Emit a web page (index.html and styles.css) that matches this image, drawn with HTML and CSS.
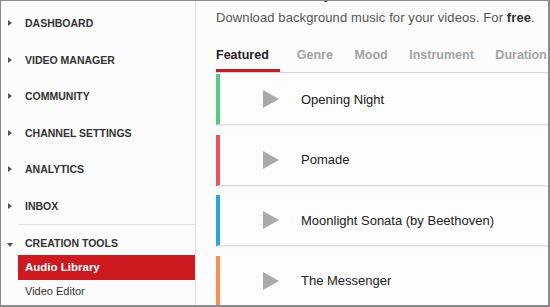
FILE: index.html
```html
<!DOCTYPE html>
<html lang="en">
  <head>
    <meta charset="UTF-8" />
    <meta name="viewport" content="width=device-width, initial-scale=1.0" />
    <title>Audio Library</title>
    <link rel="stylesheet" href="styles.css">
  </head>
  <body>
    <div class="frame">
      <div class="sidebar">
        <div class="nav-item">Dashboard</div>
        <div class="nav-item">Video Manager</div>
        <div class="nav-item">Community</div>
        <div class="nav-item">Channel Settings</div>
        <div class="nav-item">Analytics</div>
        <div class="nav-item">Inbox</div>
        <div class="nav-group">
          <div class="nav-item open">Creation Tools</div>
          <div class="sub-item active">Audio Library</div>
          <div class="sub-item">Video Editor</div>
        </div>
      </div>

      <div class="main">
        <h1 class="page-title">Audio Library</h1>
        <div class="intro">Download background music for your videos. For <b>free</b>.</div>

        <div class="tabs">
          <div class="tab active">Featured</div>
          <div class="tab">Genre</div>
          <div class="tab">Mood</div>
          <div class="tab">Instrument</div>
          <div class="tab">Duration</div>
        </div>

        <div class="tracks">
          <div class="track green">
            <span class="play"></span>
            <span class="track-title">Opening Night</span>
          </div>
          <div class="track red">
            <span class="play"></span>
            <span class="track-title">Pomade</span>
          </div>
          <div class="track blue">
            <span class="play"></span>
            <span class="track-title">Moonlight Sonata (by Beethoven)</span>
          </div>
          <div class="track orange">
            <span class="play"></span>
            <span class="track-title">The Messenger</span>
          </div>
        </div>
      </div>
    </div>
  </body>
</html>
```

FILE: styles.css
```css
body {
  margin: 0;
  font-family: "Liberation Sans", Arial, sans-serif;
  background-color: #fff;
  color: #222;
}

.frame {
  width: 550px;
  height: 307px;
  box-sizing: border-box;
  border-style: solid;
  border-color: #8a8a8a;
  border-width: 1px 2px 2px 1px;
  background-color: #fcfcfc;
  display: flex;
  overflow: hidden;
}

/* left menu */
.sidebar {
  width: 195px;
  flex-shrink: 0;
  box-sizing: border-box;
  border-right: 1px solid #dedede;
  padding-top: 4px;
}

.nav-item {
  position: relative;
  height: 36.5px;
  line-height: 36.5px;
  padding-left: 24px;
  font-size: 10.5px;
  font-weight: bold;
  text-transform: uppercase;
  color: #333;
}

.nav-item::before {
  content: "";
  position: absolute;
  left: 7px;
  top: 50%;
  margin-top: -3px;
  border-style: solid;
  border-width: 3px 0 3px 4px;
  border-color: transparent transparent transparent #555;
}

.nav-group {
  margin-left: 17px;
  border-top: 1px solid #e2e2e2;
}

.nav-group .nav-item {
  margin-left: -17px;
  height: auto;
  line-height: 12px;
  padding-top: 12px;
  padding-bottom: 6px;
}

.nav-item.open::before {
  left: 6px;
  margin-top: 3px;
  border-width: 4px 3px 0 3px;
  border-color: #555 transparent transparent transparent;
}

.sub-item {
  height: 24px;
  line-height: 23px;
  padding-left: 7px;
  font-size: 11px;
  color: #333;
}

.sub-item.active {
  height: 25px;
  line-height: 25px;
  background-color: #cd1a20;
  color: #fff;
  font-weight: bold;
  font-size: 11.5px;
}

/* content */
.main {
  flex: 1;
  padding-left: 20px;
  min-width: 0;
}

.page-title {
  margin: -20px 0 0;
  font-size: 20px;
  line-height: 20px;
  font-weight: normal;
  color: #222;
}

.intro {
  margin-top: 9px;
  font-size: 13px;
  line-height: 16px;
  letter-spacing: 0.1px;
  color: #555;
}

.intro b {
  color: #333;
}

.tabs {
  display: flex;
  margin-top: 21px;
  border-bottom: 1px solid #d4d4d4;
}

.tab {
  flex-shrink: 0;
  white-space: nowrap;
  margin-right: 21.5px;
  padding-bottom: 6px;
  font-size: 12.5px;
  line-height: 16px;
  font-weight: bold;
  color: #a3a3a3;
  border-bottom: 3px solid transparent;
}

.tab.active {
  color: #222;
  padding-right: 11px;
  margin-right: 17px;
  border-bottom-color: #bf2127;
}

.tracks {
  margin-top: 1px;
}

.track {
  display: flex;
  align-items: center;
  height: 50px;
  margin-bottom: 9.5px;
  background-color: #fdfdfd;
  border-left: 4px solid #ccc;
  border-bottom: 1px solid #e0e0e0;
  box-shadow: 0 1px 1px rgba(0, 0, 0, 0.06);
}

.track.green { border-left-color: #58c882; }
.track.red { border-left-color: #e9545a; }
.track.blue { border-left-color: #2aa3e8; }
.track.orange { border-left-color: #f0914d; }

.play {
  width: 0;
  height: 0;
  margin-left: 43px;
  border-style: solid;
  border-width: 9px 0 9px 16px;
  border-color: transparent transparent transparent #aaa;
}

.track-title {
  margin-left: 22px;
  font-size: 13px;
  color: #222;
}
```
